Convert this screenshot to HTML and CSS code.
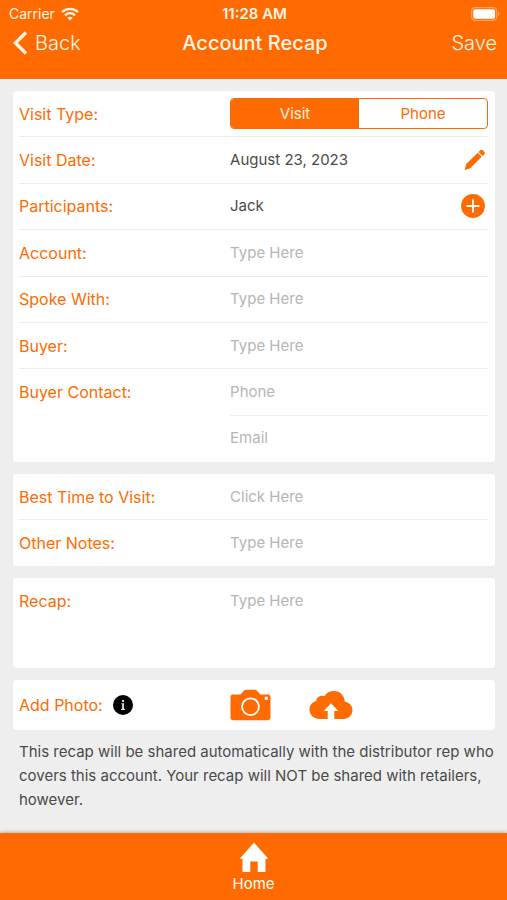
FILE: index.html
```html
<!DOCTYPE html>
<html lang="en">
<head>
<meta charset="utf-8">
<meta name="viewport" content="width=device-width, initial-scale=1">
<title>Account Recap</title>
<link rel="stylesheet" href="styles.css">
</head>
<body>
<header class="header">
  <div class="status">
    <span class="carrier">Carrier
      <svg width="18" height="14" viewBox="0 0 18 14" fill="none" stroke="currentColor" stroke-width="2.4" aria-hidden="true">
        <path d="M1 5.2C5.6.7 12.400.7 17 5.200"/><path d="M4 8.300c2.900-2.700 7.100-2.700 10 0"/><path d="M9 13.500 6.200 10.700c1.600-1.400 4-1.400 5.600 0z" fill="currentColor" stroke="none"/>
      </svg>
    </span>
    <span class="time">11:28 AM</span>
    <svg class="battery" width="29" height="14" viewBox="0 0 29 14" aria-hidden="true">
      <rect x=".7" y=".7" width="25" height="12.600" rx="3.500" fill="none" stroke="#ffa05c" stroke-width="1.200"/>
      <rect x="2.300" y="2.300" width="21.800" height="9.400" rx="2" fill="#fff"/>
      <path d="M27 4.800c1.900.8 1.900 3.600 0 4.400z" fill="#ffa05c"/>
    </svg>
  </div>
  <div class="nav">
    <button class="nav-btn back" type="button">
      <svg width="15" height="24" viewBox="0 0 15 24" fill="none" stroke="currentColor" stroke-width="3.400" aria-hidden="true"><path d="M13 1.500 2.500 12 13 22.500"/></svg>
      Back
    </button>
    <h1 class="title">Account Recap</h1>
    <button class="nav-btn save" type="button">Save</button>
  </div>
</header>

<main class="main">
  <form class="form">
    <section class="card card-visit">
      <div class="row">
        <span class="label" id="type-label">Visit Type:</span>
        <div class="segment" role="group" aria-labelledby="type-label">
          <button class="seg seg-on" type="button" aria-pressed="true">Visit</button>
          <button class="seg" type="button" aria-pressed="false">Phone</button>
        </div>
      </div>
      <div class="row">
        <label class="label" for="date">Visit Date:</label>
        <div class="value">
          <input class="field" id="date" type="text" value="August 23, 2023">
          <button class="icon-btn" type="button" aria-label="Edit visit date">
            <svg width="24" height="24" viewBox="0 0 24 24" fill="currentColor" aria-hidden="true">
              <path d="M4.200 16 15.700 4.800l4 4L8.300 20.200 2.600 22z"/><path d="m16.500 4 1.700-1.700c.8-.8 1.800-.8 2.600 0l1.500 1.500c.8.8.8 1.800 0 2.600L20.500 8z"/>
            </svg>
          </button>
        </div>
      </div>
      <div class="row">
        <label class="label" for="participants">Participants:</label>
        <div class="value">
          <input class="field" id="participants" type="text" value="Jack">
          <button class="icon-btn" type="button" aria-label="Add participant">
            <svg width="26" height="24" viewBox="0 0 26 24" aria-hidden="true">
              <circle cx="13" cy="12" r="11.900" fill="currentColor"/><path d="M13 5.500v13M6.500 12h13" stroke="#fff" stroke-width="1.800"/>
            </svg>
          </button>
        </div>
      </div>
      <div class="row">
        <label class="label" for="account">Account:</label>
        <input class="field" id="account" type="text" placeholder="Type Here">
      </div>
      <div class="row">
        <label class="label" for="spoke">Spoke With:</label>
        <input class="field" id="spoke" type="text" placeholder="Type Here">
      </div>
      <div class="row">
        <label class="label" for="buyer">Buyer:</label>
        <input class="field" id="buyer" type="text" placeholder="Type Here">
      </div>
      <div class="row row-joined">
        <label class="label" for="phone">Buyer Contact:</label>
        <input class="field" id="phone" type="tel" placeholder="Phone">
      </div>
      <div class="row">
        <input class="field field-second" type="email" placeholder="Email" aria-label="Buyer email">
      </div>
    </section>

    <section class="card card-notes">
      <div class="row">
        <label class="label" for="best">Best Time to Visit:</label>
        <input class="field" id="best" type="text" placeholder="Click Here">
      </div>
      <div class="row">
        <label class="label" for="notes">Other Notes:</label>
        <input class="field" id="notes" type="text" placeholder="Type Here">
      </div>
    </section>

    <section class="card">
      <div class="row row-recap">
        <label class="label" for="recap">Recap:</label>
        <textarea class="field area" id="recap" rows="3" placeholder="Type Here"></textarea>
      </div>
    </section>

    <section class="card">
      <div class="row row-photo">
        <div class="label photo-label">Add Photo:
          <button class="icon-btn info" type="button" aria-label="Photo information">
            <svg width="20" height="20" viewBox="0 0 20 20" aria-hidden="true">
              <circle cx="10" cy="10" r="10" fill="#000"/><path d="M9 5h2v2H9zM8.300 8.200H11v5.600h1V15H8v-1.200h1.100V9.300h-.8z" fill="#ddd"/>
            </svg>
          </button>
        </div>
        <div class="photo-actions">
          <button class="icon-btn" type="button" aria-label="Take photo">
            <svg width="41" height="32" viewBox="0 0 41 32" aria-hidden="true">
              <path d="M3 5.500h7.500L14.200 1.500Q15 .7 16.500.7h8q1.500 0 2.300.8l3.700 4H38q2.500 0 2.500 2.500v20.500q0 2.800-2.800 2.800H3.300Q.5 31.300.5 28.500V8Q.5 5.500 3 5.500z" fill="currentColor"/>
              <circle cx="20.500" cy="17.700" r="8.400" fill="none" stroke="#fff" stroke-width="1.800"/><rect x="34.800" y="7.800" width="3" height="3" rx=".5" fill="#fff"/>
            </svg>
          </button>
          <button class="icon-btn" type="button" aria-label="Upload photo">
            <svg width="44" height="30" viewBox="0 0 44 30" aria-hidden="true">
              <path d="M10.500 29C4.700 29 .5 25 .5 19.600c0-4.600 2.900-7.700 6.700-8.700.3-3.700 4.400-6.200 8.200-4.700C17.300 2.800 20.900.9 25 .9c6 0 10.500 4.600 10.800 10.800 4.400.5 7.700 4 7.700 8.400 0 5-3.900 8.900-8.900 8.900z" fill="currentColor"/>
              <path d="m22 13.200 7.300 7.900h-4V29.500h-6.600v-8.400h-4z" fill="#fff"/>
            </svg>
          </button>
        </div>
      </div>
    </section>
  </form>
  <p class="note">This recap will be shared automatically with the distributor rep who covers this account. Your recap will NOT be shared with retailers, however.</p>
</main>

<footer class="tabbar">
  <a class="tab" href="#home">
    <svg width="30" height="30" viewBox="0 0 30 30" fill="currentColor" aria-hidden="true"><path d="M15 .5 29.300 16.700H26.500V30h-7.800V19.500h-7.400V30H3.500V16.700H.7z"/></svg>
    Home
  </a>
</footer>
</body>
</html>
```
FILE: styles.css
```css
* { box-sizing: border-box; }

body {
  margin: 0;
  min-height: 100vh;
  display: flex;
  flex-direction: column;
  background: #eeeeee;
  color: #4a4a4a;
  font: 15px/24px Inter, "Liberation Sans", sans-serif;
}

button, input, textarea { font: inherit; }

button {
  padding: 0;
  border: 0;
  background: none;
  color: inherit;
}

svg { display: block; }

.header {
  height: 79px;
  background: #ff6b00;
  color: #fff3e6;
}

.status, .nav {
  display: grid;
  grid-template-columns: 1fr auto 1fr;
  align-items: center;
}

.status {
  padding: 4px 7px 0 9px;
  font-size: 14px;
  line-height: 20px;
}

.carrier { display: flex; align-items: center; gap: 6px; }
.time { font-size: 15px; font-weight: 600; }
.battery { justify-self: end; }

.nav {
  padding: 4px 10px 0 13px;
  font-size: 20px;
  line-height: 30px;
}

.nav-btn { font-weight: 300; }
.back { justify-self: start; display: flex; align-items: center; gap: 7px; }
.save { justify-self: end; }
.title { margin: 0; font-size: 20px; font-weight: 500; }

.main { flex: 1; padding: 12px 12px 20px 13px; }

.form { display: flex; flex-direction: column; gap: 12px; }

.card {
  display: flex;
  flex-direction: column;
  padding: 0 7px 0 6px;
  border-radius: 4px;
  background: #fff;
}

.card-visit { min-height: 371px; }
.card-notes { min-height: 92px; }

.row {
  flex: 1 1 46px;
  display: grid;
  grid-template-columns: 45% 1fr;
  align-items: center;
  border-bottom: 1px solid #ececec;
}

.row:last-child { border-bottom-color: transparent; }

.row-joined {
  border-image: linear-gradient(to right, transparent 45%, #ececec 45%) 1;
}

.label { color: #ff6b00; font-size: 16px; }

.field {
  width: 100%;
  min-width: 0;
  height: 24px;
  padding: 0;
  border: 0;
  outline: 0;
  background: none;
  color: #4a4a4a;
}

.field::placeholder { color: #b5b5b5; opacity: 1; }
.field-second { grid-column: 2; }

.value { display: flex; align-items: center; }
.icon-btn { flex: none; margin-right: 2px; color: #ff6b00; }

.segment {
  display: grid;
  grid-template-columns: 1fr 1fr;
  height: 31px;
  overflow: hidden;
  border: 1px solid #ff6b00;
  border-radius: 4px;
}

.seg { color: #ff6b00; }
.seg-on { background: #ff6b00; color: #fff3e6; }

.row-recap { align-items: start; padding: 11px 0 6px; }
.area { display: block; height: 72px; resize: none; line-height: 24px; }

.row-photo { min-height: 50px; }
.photo-label { display: flex; align-items: center; gap: 10px; }
.photo-actions { display: flex; align-items: center; gap: 36px; }

.note { margin: 10px 0 0; padding-left: 6px; }

.tabbar {
  display: flex;
  justify-content: center;
  padding: 9px 0 4px;
  background: #ff6b00;
  box-shadow: 0 -1px 3px #00000040;
}

.tab {
  display: flex;
  flex-direction: column;
  align-items: center;
  color: #fff;
  text-decoration: none;
}
```
